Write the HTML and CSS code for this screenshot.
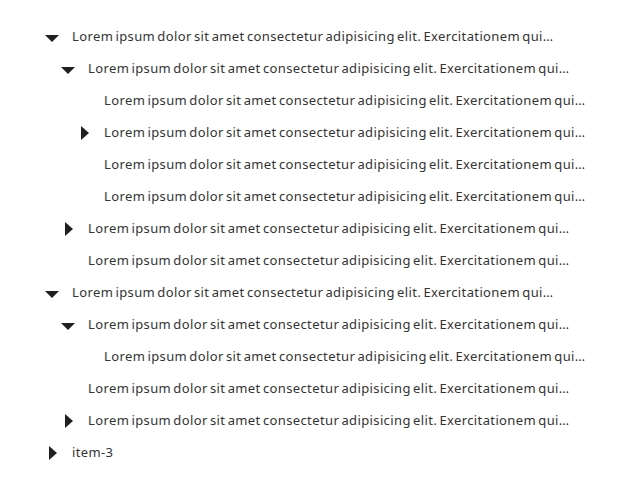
FILE: index.html
```html
<!DOCTYPE html>
<html>
<head>
<meta charset="utf-8">
<link rel="stylesheet" href="styles.css">
</head>
<body>
<ul class="tree">
  <li>
    <div class="row"><span class="caret"><svg class="down" width="14" height="7" viewBox="0 0 14 7"><polygon points="0,0 14,0 7,7"/></svg></span><span class="label">Lorem ipsum dolor sit amet consectetur adipisicing elit. Exercitationem qui…</span></div>
    <ul>
      <li>
        <div class="row"><span class="caret"><svg class="down" width="14" height="7" viewBox="0 0 14 7"><polygon points="0,0 14,0 7,7"/></svg></span><span class="label">Lorem ipsum dolor sit amet consectetur adipisicing elit. Exercitationem qui…</span></div>
        <ul>
          <li><div class="row"><span class="caret"></span><span class="label">Lorem ipsum dolor sit amet consectetur adipisicing elit. Exercitationem qui…</span></div></li>
          <li><div class="row"><span class="caret"><svg class="right" width="8" height="14" viewBox="0 0 8 14"><polygon points="0,0 8,7 0,14"/></svg></span><span class="label">Lorem ipsum dolor sit amet consectetur adipisicing elit. Exercitationem qui…</span></div></li>
          <li><div class="row"><span class="caret"></span><span class="label">Lorem ipsum dolor sit amet consectetur adipisicing elit. Exercitationem qui…</span></div></li>
          <li><div class="row"><span class="caret"></span><span class="label">Lorem ipsum dolor sit amet consectetur adipisicing elit. Exercitationem qui…</span></div></li>
        </ul>
      </li>
      <li><div class="row"><span class="caret"><svg class="right" width="8" height="14" viewBox="0 0 8 14"><polygon points="0,0 8,7 0,14"/></svg></span><span class="label">Lorem ipsum dolor sit amet consectetur adipisicing elit. Exercitationem qui…</span></div></li>
      <li><div class="row"><span class="caret"></span><span class="label">Lorem ipsum dolor sit amet consectetur adipisicing elit. Exercitationem qui…</span></div></li>
    </ul>
  </li>
  <li>
    <div class="row"><span class="caret"><svg class="down" width="14" height="7" viewBox="0 0 14 7"><polygon points="0,0 14,0 7,7"/></svg></span><span class="label">Lorem ipsum dolor sit amet consectetur adipisicing elit. Exercitationem qui…</span></div>
    <ul>
      <li>
        <div class="row"><span class="caret"><svg class="down" width="14" height="7" viewBox="0 0 14 7"><polygon points="0,0 14,0 7,7"/></svg></span><span class="label">Lorem ipsum dolor sit amet consectetur adipisicing elit. Exercitationem qui…</span></div>
        <ul>
          <li><div class="row"><span class="caret"></span><span class="label">Lorem ipsum dolor sit amet consectetur adipisicing elit. Exercitationem qui…</span></div></li>
        </ul>
      </li>
      <li><div class="row"><span class="caret"></span><span class="label">Lorem ipsum dolor sit amet consectetur adipisicing elit. Exercitationem qui…</span></div></li>
      <li><div class="row"><span class="caret"><svg class="right" width="8" height="14" viewBox="0 0 8 14"><polygon points="0,0 8,7 0,14"/></svg></span><span class="label">Lorem ipsum dolor sit amet consectetur adipisicing elit. Exercitationem qui…</span></div></li>
    </ul>
  </li>
  <li><div class="row"><span class="caret"><svg class="right" width="8" height="14" viewBox="0 0 8 14"><polygon points="0,0 8,7 0,14"/></svg></span><span class="label">item-3</span></div></li>
</ul>
</body>
</html>
```
FILE: styles.css
```css
html, body {
  margin: 0;
  padding: 0;
  background: #ffffff;
}
body {
  font-family: "Noto Sans", "DejaVu Sans", sans-serif;
  font-size: 13px;
  color: #333333;
}
.tree {
  list-style: none;
  margin: 0;
  padding: 20px 0 0 40px;
}
.tree ul {
  list-style: none;
  margin: 0;
  padding: 0 0 0 16px;
}
.row {
  display: flex;
  align-items: center;
  height: 32px;
}
.caret {
  width: 24px;
  height: 32px;
  display: flex;
  align-items: center;
  justify-content: center;
  margin-right: 8px;
  flex: none;
}
.caret svg {
  fill: #1f1f1f;
  display: block;
}
.caret .down {
  margin-top: 4px;
}
.caret .right {
  margin-left: 2px;
  margin-top: 2px;
}
.label {
  white-space: nowrap;
  word-spacing: -1.5px;
  letter-spacing: 0.38px;
}
```
